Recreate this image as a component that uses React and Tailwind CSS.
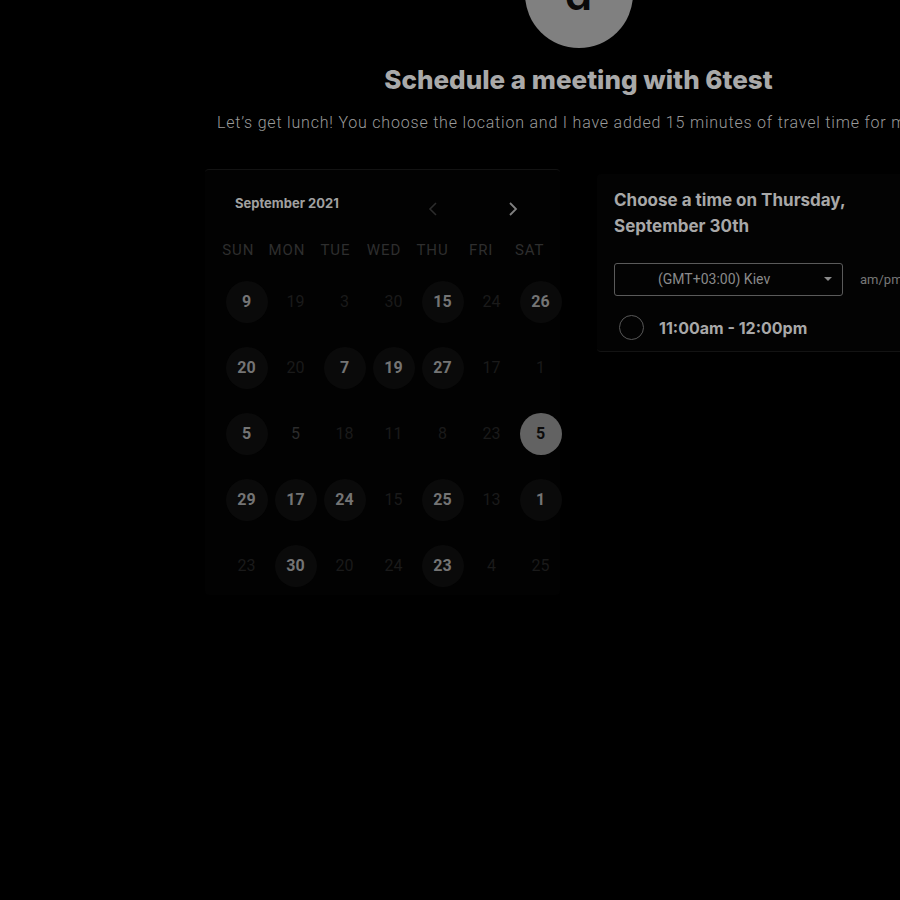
import React from 'react';

const rows = [
  [[9, 1], [19, 0], [3, 0], [30, 0], [15, 1], [24, 0], [26, 1]],
  [[20, 1], [20, 0], [7, 1], [19, 1], [27, 1], [17, 0], [1, 0]],
  [[5, 1], [5, 3], [18, 0], [11, 0], [8, 0], [23, 0], [5, 2]],
  [[29, 1], [17, 1], [24, 1], [15, 0], [25, 1], [13, 0], [1, 1]],
  [[23, 0], [30, 1], [20, 0], [24, 0], [23, 1], [4, 0], [25, 0]],
];

const days = ['SUN', 'MON', 'TUE', 'WED', 'THU', 'FRI', 'SAT'];

const Day = ({ n, state }) => {
  if (state === 2) {
    return (
      <div className="w-[42px] h-[42px] rounded-full bg-[#626262] flex items-center justify-center text-[16px] font-bold text-[#0b0b0b]">
        {n}
      </div>
    );
  }
  if (state === 1) {
    return (
      <div className="w-[42px] h-[42px] rounded-full bg-[#0a0a0a] flex items-center justify-center text-[16px] font-bold text-[#747474]">
        {n}
      </div>
    );
  }
  return (
    <div className={`w-[42px] h-[42px] flex items-center justify-center text-[16px] ${state === 3 ? 'text-[#2c2c2c]' : 'text-[#1a1a1a]'}`}>
      {n}
    </div>
  );
};

export default function App() {
  return (
    <div className="w-[900px] h-[900px] overflow-hidden bg-black" style={{ fontFamily: 'Roboto, "Noto Sans", sans-serif' }}>
      <div className="w-[747px] ml-[205px] flex flex-col items-center">
        {/* Avatar */}
        <div className="w-[108px] h-[108px] -mt-[60px] rounded-full bg-[#808080] flex items-center justify-center">
          <span className="text-[44px] font-semibold text-[#0a0a0a] leading-none" style={{ fontFamily: 'Inter, sans-serif' }}>d</span>
        </div>

        <h1 className="mt-[16px] text-[26px] leading-[32px] font-extrabold text-[#a9a9a9]" style={{ fontFamily: 'Inter, sans-serif' }}>
          Schedule a meeting with 6test
        </h1>
        <p className="mt-[15px] w-full pl-[12px] text-[16px] font-light tracking-[0.05em] text-[#9a9a9a] whitespace-nowrap">
          Let’s get lunch! You choose the location and I have added 15 minutes of travel time for me to get there.
        </p>

        <div className="w-full mt-[27px] flex gap-[37px] items-start">
          {/* Calendar */}
          <div className="w-[355px] h-[426px] mt-[7px] bg-[#020202] border-t border-[#131313] rounded-sm">
            <div className="flex items-center pt-[20px] pl-[30px]">
              <span className="text-[13px] font-bold text-[#a0a0a0]" style={{ fontFamily: 'Inter, sans-serif' }}>September 2021</span>
              <div className="ml-[88px] flex items-center gap-[68px] mt-[11px]">
                <svg width="12" height="16" viewBox="0 0 12 16" fill="none" stroke="#2c2c2c" strokeWidth="1.6">
                  <path d="M9 2 L3 8 L9 14" />
                </svg>
                <svg width="12" height="16" viewBox="0 0 12 16" fill="none" stroke="#808080" strokeWidth="1.8">
                  <path d="M3 2 L9 8 L3 14" />
                </svg>
              </div>
            </div>
            <div className="grid grid-cols-7 w-[340px] ml-[9px] mt-[22px]">
              {days.map((d) => (
                <div key={d} className="text-center text-[15px] tracking-[0.06em] text-[#2e2e2e]">{d}</div>
              ))}
            </div>
            <div className="w-[343px] ml-[17px] mt-[19px] flex flex-col gap-[24px]">
              {rows.map((r, i) => (
                <div key={i} className="grid grid-cols-7 justify-items-center">
                  {r.map(([n, s], j) => (
                    <Day key={j} n={n} state={s} />
                  ))}
                </div>
              ))}
            </div>
          </div>

          {/* Time panel */}
          <div className="w-[355px] h-[178px] mt-[12px] bg-[#030303] border-b border-[#131313] rounded-sm pl-[17px] pt-[13px]">
            <h2 className="text-[17px] leading-[26px] font-bold text-[#a8a8a8]" style={{ fontFamily: 'Inter, sans-serif' }}>
              Choose a time on Thursday,<br />September 30th
            </h2>
            <div className="mt-[24px] flex items-center">
              <div className="w-[229px] h-[33px] border border-[#5a5a5a] rounded-[3px] flex items-center pl-[43px] pr-[10px]">
                <span className="text-[14px] text-[#8a8a8a]">(GMT+03:00) Kiev</span>
                <svg className="ml-auto" width="8" height="5" viewBox="0 0 8 5">
                  <path d="M0 0 L8 0 L4 4 Z" fill="#8a8a8a" />
                </svg>
              </div>
              <span className="ml-[17px] text-[13px] text-[#777]">am/pm</span>
            </div>
            <div className="mt-[19px] flex items-center pl-[5px]">
              <div className="w-[25px] h-[25px] rounded-full border-[1.5px] border-[#585858]" />
              <span className="ml-[15px] text-[16px] font-bold text-[#a8a8a8]" style={{ fontFamily: 'Inter, sans-serif' }}>
                11:00am - 12:00pm
              </span>
            </div>
          </div>
        </div>
      </div>
    </div>
  );
}
